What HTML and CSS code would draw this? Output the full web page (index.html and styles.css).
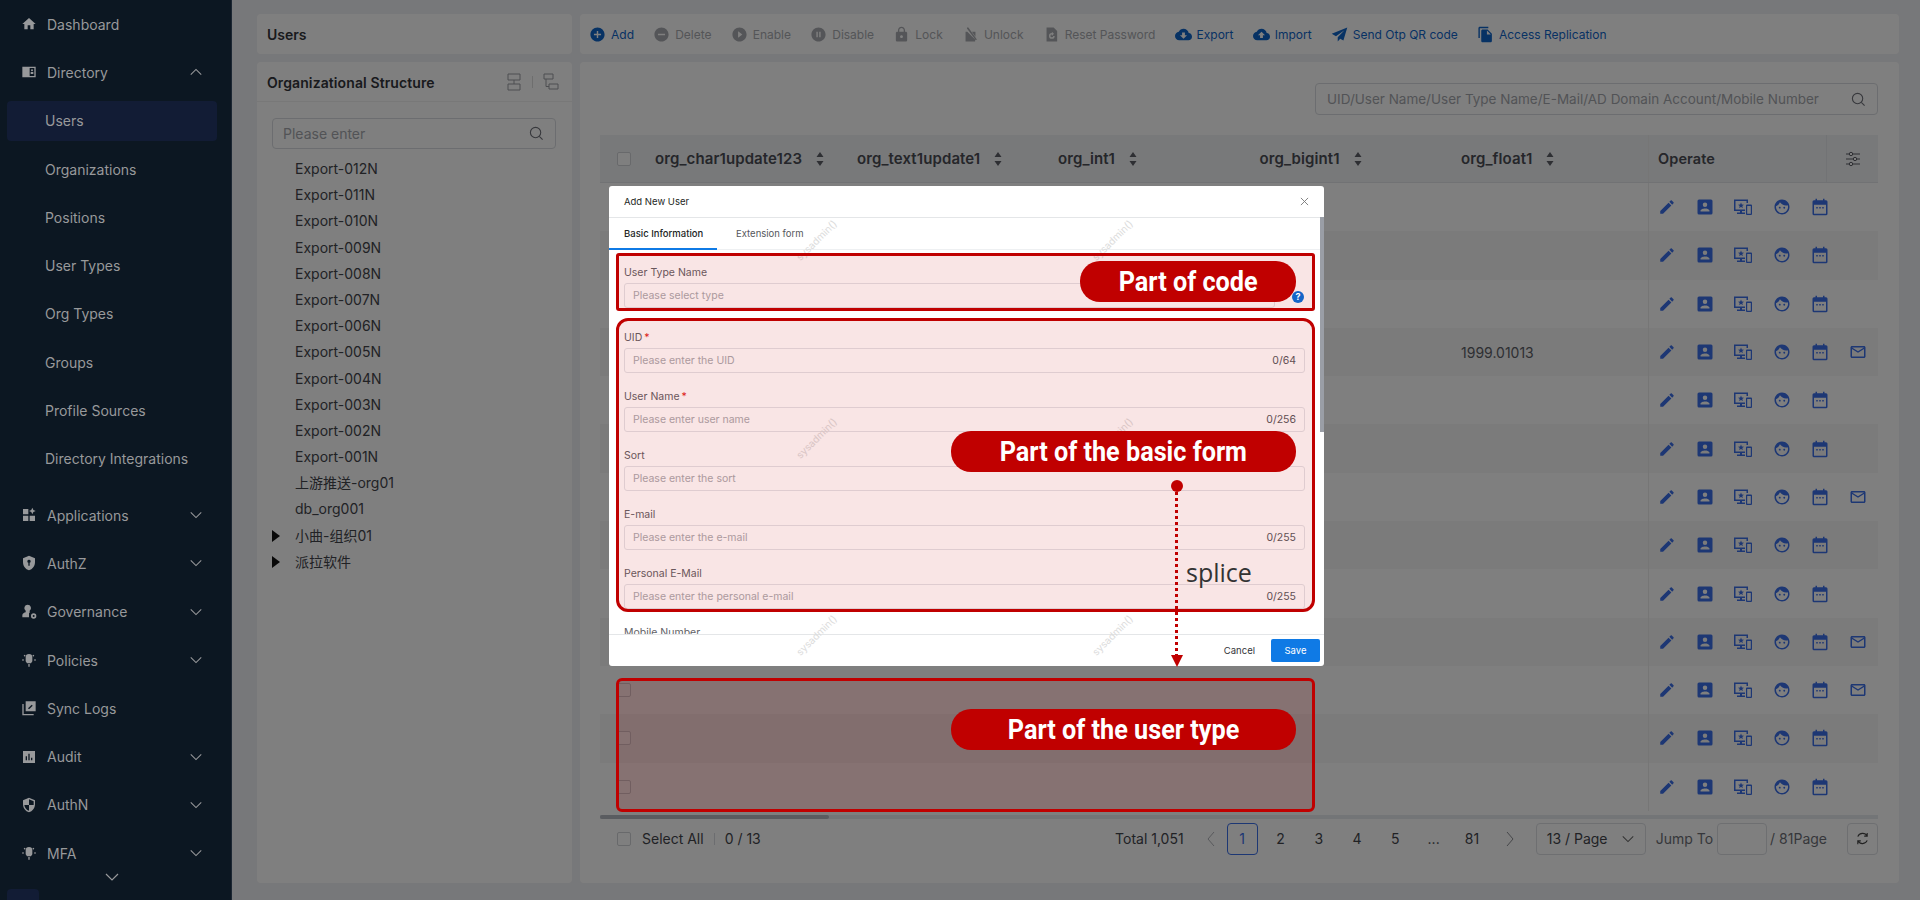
FILE: index.html
```html
<!DOCTYPE html>
<html lang="en">
<head>
    <meta charset="UTF-8">
    <title>Users</title>
    <link rel="stylesheet" href="styles.css">
</head>
<body>
    <svg class="sprites" xmlns="http://www.w3.org/2000/svg">
        <symbol id="i-home" viewBox="0 0 24 24"><path d="M10 20v-6h4v6h5v-8h3L12 3 2 12h3v8z"/></symbol>
        <symbol id="i-dir" viewBox="0 0 24 24"><path fill-rule="evenodd" d="M2 4h20v16H2zM13 6v12h7V6zM16.500 8a1.500 1.500 0 1 1 0 3 1.500 1.500 0 0 1 0-3zM14.500 12h4v3h-4z"/></symbol>
        <symbol id="i-apps" viewBox="0 0 24 24"><path d="M3 3h8v8H3zM3 13h8v8H3zM13 13h8v8h-8zM17 1l1.600 3.400L22 6l-3.400 1.600L17 11l-1.600-3.400L12 6l3.400-1.600z"/></symbol>
        <symbol id="i-shield" viewBox="0 0 24 24"><path fill-rule="evenodd" d="M12 1l9 4v6c0 5.500-3.800 10.700-9 12-5.200-1.300-9-6.500-9-12V5zM12 7a2.500 2.500 0 0 0-1 4.800V16h2v-4.200A2.500 2.500 0 0 0 12 7z"/></symbol>
        <symbol id="i-gov" viewBox="0 0 24 24"><path fill-rule="evenodd" d="M10 1a5 5 0 0 1 3 9v3l-1 1v6H2v-3c0-2.500 3-4 5-4.500V10a5 5 0 0 1 3-9zM19 14a4 4 0 1 1 0 8 4 4 0 0 1 0-8zM19 16.500a1.500 1.500 0 1 0 0 3 1.500 1.500 0 0 0 0-3z"/></symbol>
        <symbol id="i-bulb" viewBox="0 0 24 24"><path d="M12 3a5 5 0 0 1 5 5v6l-2 3H9l-2-3V8a5 5 0 0 1 5-5zM11 18h2v4h-2zM2 11h2v2H2zM20 11h2v2h-2zM4 5l1.500-1L7 5.500 5.500 7zM20 5l-1.500-1L17 5.500 18.500 7z"/></symbol>
        <symbol id="i-logs" viewBox="0 0 24 24"><path d="M7 2h15v15H7zM4 6v15h15v2H2V6z"/><path fill="#0c1722" d="M11 13.500V12l5-5 1.500 1.500-5 5z"/></symbol>
        <symbol id="i-audit" viewBox="0 0 24 24"><path fill-rule="evenodd" d="M3 3h18v18H3zM7 11v6h2v-6zM11 7v10h2V7zM15 13v4h2v-4z"/></symbol>
        <symbol id="i-authn" viewBox="0 0 24 24"><path fill-rule="evenodd" d="M12 1l9 4v6c0 5.500-3.800 10.700-9 12-5.200-1.300-9-6.500-9-12V5zM12 3.200V12H5c.3 3.800 3.200 7.600 7 8.800V12h7V6.300z"/></symbol>
        <symbol id="i-add" viewBox="0 0 24 24"><path d="M12 2C6.480 2 2 6.480 2 12s4.480 10 10 10 10-4.480 10-10S17.520 2 12 2zm5 11h-4v4h-2v-4H7v-2h4V7h2v4h4v2z"/></symbol>
        <symbol id="i-del" viewBox="0 0 24 24"><path d="M12 2C6.480 2 2 6.480 2 12s4.480 10 10 10 10-4.480 10-10S17.520 2 12 2zm5 11H7v-2h10v2z"/></symbol>
        <symbol id="i-play" viewBox="0 0 24 24"><path d="M12 2C6.480 2 2 6.480 2 12s4.480 10 10 10 10-4.480 10-10S17.520 2 12 2zm-2 14.500v-9l6 4.500-6 4.500z"/></symbol>
        <symbol id="i-pause" viewBox="0 0 24 24"><path d="M12 2C6.480 2 2 6.480 2 12s4.480 10 10 10 10-4.480 10-10S17.520 2 12 2zm-1 14H9V8h2v8zm4 0h-2V8h2v8z"/></symbol>
        <symbol id="i-lock" viewBox="0 0 24 24"><path d="M18 8h-1V6c0-2.760-2.240-5-5-5S7 3.240 7 6v2H6c-1.100 0-2 .9-2 2v10c0 1.100.9 2 2 2h12c1.100 0 2-.9 2-2V10c0-1.100-.9-2-2-2zm-6 9c-1.100 0-2-.9-2-2s.9-2 2-2 2 .9 2 2-.9 2-2 2zm3.100-9H8.900V6c0-1.710 1.390-3.100 3.100-3.100 1.710 0 3.100 1.390 3.100 3.100v2z"/></symbol>
        <symbol id="i-unlock" viewBox="0 0 24 24"><path d="M5 8h2.500l11 11V22H5zM7 2h2l12 17-1.500 1L7 3.500zM14 8h5v7z"/></symbol>
        <symbol id="i-reset" viewBox="0 0 24 24"><path fill-rule="evenodd" d="M5 2h10l5 5v15H5zM12.500 10a4 4 0 1 0 4 4h-2a2 2 0 1 1-2-2v2l3-3-3-3z"/></symbol>
        <symbol id="i-down" viewBox="0 0 24 24"><path d="M19.350 10.040C18.670 6.590 15.640 4 12 4 9.110 4 6.600 5.640 5.350 8.040 2.340 8.360 0 10.910 0 14c0 3.310 2.690 6 6 6h13c2.760 0 5-2.240 5-5 0-2.640-2.050-4.780-4.650-4.960zM17 13l-5 5-5-5h3V9h4v4h3z"/></symbol>
        <symbol id="i-up" viewBox="0 0 24 24"><path d="M19.350 10.040C18.670 6.590 15.640 4 12 4 9.110 4 6.600 5.640 5.350 8.040 2.340 8.360 0 10.910 0 14c0 3.310 2.690 6 6 6h13c2.760 0 5-2.240 5-5 0-2.640-2.050-4.780-4.650-4.960zM14 13v4h-4v-4H7l5-5 5 5h-3z"/></symbol>
        <symbol id="i-send" viewBox="0 0 24 24"><path d="M23 2L1 11l6 3.500L19 6 9.500 16v6l3.500-4 4.500 2.500z"/></symbol>
        <symbol id="i-copy" viewBox="0 0 24 24"><path d="M16 1H4c-1.100 0-2 .9-2 2v14h2V3h12V1zm-1 4l6 6v10c0 1.100-.9 2-2 2H7.990C6.890 23 6 22.100 6 21l.01-14c0-1.100.89-2 1.990-2h7zm-1 7h5.500L14 6.500V12z"/></symbol>
        <symbol id="i-edit" viewBox="0 0 24 24"><path d="M3 17.250V21h3.750L17.810 9.940l-3.750-3.750L3 17.250zM20.710 7.040c.39-.39.39-1.020 0-1.410l-2.340-2.340c-.39-.39-1.020-.39-1.410 0l-1.830 1.830 3.750 3.750 1.830-1.830z"/></symbol>
        <symbol id="i-contact" viewBox="0 0 24 24"><path fill-rule="evenodd" d="M4 2h16a2 2 0 0 1 2 2v16a2 2 0 0 1-2 2H4a2 2 0 0 1-2-2V4a2 2 0 0 1 2-2zM12 6a3 3 0 1 0 0 6 3 3 0 0 0 0-6zM6 18h12v-1c0-2-4-3-6-3s-6 1-6 3z"/></symbol>
        <symbol id="i-device" viewBox="0 0 18 18"><path fill-rule="evenodd" d="M0 1.500h14V5h-1.500V3H1.500v8.500H11V13H8v1.500h3V16H3v-1.500h3V13H0zM7 4.500l.8 2 2.200.2-1.700 1.300.6 2.100L7 9l-1.900 1.100.6-2.100L4 6.700l2.200-.2zM13 6.500h4a1 1 0 0 1 1 1V16a1 1 0 0 1-1 1h-4a1 1 0 0 1-1-1V7.500a1 1 0 0 1 1-1zM13.200 8v7.800h3.600V8z"/></symbol>
        <symbol id="i-face" viewBox="0 0 24 24"><path d="M9 11.750c-.69 0-1.250.56-1.250 1.250s.56 1.250 1.250 1.250 1.250-.56 1.250-1.250-.56-1.250-1.250-1.250zm6 0c-.69 0-1.250.56-1.250 1.250s.56 1.250 1.250 1.250 1.250-.56 1.250-1.250-.56-1.250-1.250-1.250zM12 2C6.480 2 2 6.480 2 12s4.480 10 10 10 10-4.480 10-10S17.520 2 12 2zm0 18c-4.410 0-8-3.590-8-8 0-.29.02-.58.05-.86 2.360-1.050 4.230-2.980 5.210-5.370C11.070 8.330 14.050 10 17.420 10c.78 0 1.530-.09 2.250-.26.21.71.33 1.470.33 2.260 0 4.410-3.590 8-8 8z"/></symbol>
        <symbol id="i-cal" viewBox="0 0 24 24"><path fill-rule="evenodd" d="M6 1h2v2h8V1h2v2h2a2 2 0 0 1 2 2v16a2 2 0 0 1-2 2H4a2 2 0 0 1-2-2V5a2 2 0 0 1 2-2h2zM4 9v12h16V9zM7 12h2v2H7zM11 12h2v2h-2zM15 12h2v2h-2z"/></symbol>
        <symbol id="i-mail" viewBox="0 0 24 24"><path d="M20 4H4c-1.100 0-2 .9-2 2v12c0 1.100.9 2 2 2h16c1.100 0 2-.9 2-2V6c0-1.100-.9-2-2-2zm0 14H4V8l8 5 8-5v10zm-8-7L4 6h16l-8 5z"/></symbol>
        <symbol id="i-sort" viewBox="0 0 8 14"><path d="M4 0l3.500 5h-7zM4 14L.5 9h7z"/></symbol>
        <symbol id="i-search" viewBox="0 0 16 16"><circle cx="7" cy="7" r="5.500" fill="none" stroke="currentColor" stroke-width="1.200"/><path d="M11 11l3.500 3.500" fill="none" stroke="currentColor" stroke-width="1.200"/></symbol>
        <symbol id="i-chev" viewBox="0 0 16 16"><path d="M2 5l6 6 6-6" fill="none" stroke="currentColor" stroke-width="1.200"/></symbol>
    </svg>

    <div class="sidebar">
        <div class="nav-top"><svg class="nav-icon"><use href="#i-home"/></svg>Dashboard</div>
        <div class="nav-top"><svg class="nav-icon"><use href="#i-dir"/></svg>Directory<svg class="nav-arrow flip"><use href="#i-chev"/></svg></div>
        <div class="nav-sub active">Users</div>
        <div class="nav-sub">Organizations</div>
        <div class="nav-sub">Positions</div>
        <div class="nav-sub">User Types</div>
        <div class="nav-sub">Org Types</div>
        <div class="nav-sub">Groups</div>
        <div class="nav-sub">Profile Sources</div>
        <div class="nav-sub">Directory Integrations</div>
        <div class="nav-top spaced"><svg class="nav-icon"><use href="#i-apps"/></svg>Applications<svg class="nav-arrow"><use href="#i-chev"/></svg></div>
        <div class="nav-top"><svg class="nav-icon"><use href="#i-shield"/></svg>AuthZ<svg class="nav-arrow"><use href="#i-chev"/></svg></div>
        <div class="nav-top"><svg class="nav-icon"><use href="#i-gov"/></svg>Governance<svg class="nav-arrow"><use href="#i-chev"/></svg></div>
        <div class="nav-top"><svg class="nav-icon"><use href="#i-bulb"/></svg>Policies<svg class="nav-arrow"><use href="#i-chev"/></svg></div>
        <div class="nav-top"><svg class="nav-icon"><use href="#i-logs"/></svg>Sync Logs</div>
        <div class="nav-top"><svg class="nav-icon"><use href="#i-audit"/></svg>Audit<svg class="nav-arrow"><use href="#i-chev"/></svg></div>
        <div class="nav-top"><svg class="nav-icon"><use href="#i-authn"/></svg>AuthN<svg class="nav-arrow"><use href="#i-chev"/></svg></div>
        <div class="nav-top"><svg class="nav-icon"><use href="#i-bulb"/></svg>MFA<svg class="nav-arrow"><use href="#i-chev"/></svg></div>
        <svg class="nav-more"><use href="#i-chev"/></svg>
        <div class="nav-collapse"></div>
    </div>

    <div class="main">
        <div class="left-col">
            <div class="panel page-title">Users</div>
            <div class="panel tree-panel">
                <div class="tree-head">
                    <span>Organizational Structure</span>
                    <span class="tree-tools">
                        <svg viewBox="0 0 16 18"><path d="M2 1h12v6H2zM2 11h12v6H2zM8 7v4" fill="none" stroke="currentColor"/></svg>
                        <i class="tool-sep"></i>
                        <svg viewBox="0 0 16 18"><path d="M1 1h9v5H1zM6 11h9v5H6zM3 6v7.500h3" fill="none" stroke="currentColor"/></svg>
                    </span>
                </div>
                <div class="tree-body">
                    <div class="input tree-search"><span class="placeholder">Please enter</span><svg class="search-icon"><use href="#i-search"/></svg></div>
                    <div class="tree-item">Export-012N</div>
                    <div class="tree-item">Export-011N</div>
                    <div class="tree-item">Export-010N</div>
                    <div class="tree-item">Export-009N</div>
                    <div class="tree-item">Export-008N</div>
                    <div class="tree-item">Export-007N</div>
                    <div class="tree-item">Export-006N</div>
                    <div class="tree-item">Export-005N</div>
                    <div class="tree-item">Export-004N</div>
                    <div class="tree-item">Export-003N</div>
                    <div class="tree-item">Export-002N</div>
                    <div class="tree-item">Export-001N</div>
                    <div class="tree-item">上游推送-org01</div>
                    <div class="tree-item">db_org001</div>
                    <div class="tree-item has-kids">小曲-组织01</div>
                    <div class="tree-item has-kids">派拉软件</div>
                </div>
            </div>
        </div>

        <div class="right-col">
            <div class="panel toolbar">
                <span class="tool"><svg><use href="#i-add"/></svg>Add</span>
                <span class="tool off"><svg><use href="#i-del"/></svg>Delete</span>
                <span class="tool off"><svg><use href="#i-play"/></svg>Enable</span>
                <span class="tool off"><svg><use href="#i-pause"/></svg>Disable</span>
                <span class="tool off"><svg><use href="#i-lock"/></svg>Lock</span>
                <span class="tool off"><svg><use href="#i-unlock"/></svg>Unlock</span>
                <span class="tool off"><svg><use href="#i-reset"/></svg>Reset Password</span>
                <span class="tool"><svg><use href="#i-down"/></svg>Export</span>
                <span class="tool"><svg><use href="#i-up"/></svg>Import</span>
                <span class="tool"><svg><use href="#i-send"/></svg>Send Otp QR code</span>
                <span class="tool"><svg><use href="#i-copy"/></svg>Access Replication</span>
            </div>
            <div class="panel table-panel">
                <div class="table-search">
                    <div class="input big-search"><span class="placeholder">UID/User Name/User Type Name/E-Mail/AD Domain Account/Mobile Number</span><svg class="search-icon"><use href="#i-search"/></svg></div>
                </div>
                <div class="table">
                    <div class="row head">
                        <span><i class="check"></i></span>
                        <span>org_char1update123<svg class="sort"><use href="#i-sort"/></svg></span>
                        <span>org_text1update1<svg class="sort"><use href="#i-sort"/></svg></span>
                        <span>org_int1<svg class="sort"><use href="#i-sort"/></svg></span>
                        <span>org_bigint1<svg class="sort"><use href="#i-sort"/></svg></span>
                        <span>org_float1<svg class="sort"><use href="#i-sort"/></svg></span>
                        <span class="ops ops-head">Operate<b class="col-set"><svg viewBox="0 0 16 16"><path d="M1 3h14M1 8h14M1 13h14" stroke="currentColor" fill="none"/><circle cx="6" cy="3" r="1.700" fill="#fff" stroke="currentColor"/><circle cx="10" cy="8" r="1.700" fill="#fff" stroke="currentColor"/><circle cx="6" cy="13" r="1.700" fill="#fff" stroke="currentColor"/></svg></b></span>
                    </div>
                    <div class="row"><span><i class="check"></i></span><span></span><span></span><span></span><span></span><span></span><span class="ops"><svg><use href="#i-edit"/></svg><svg><use href="#i-contact"/></svg><svg><use href="#i-device"/></svg><svg><use href="#i-face"/></svg><svg><use href="#i-cal"/></svg></span></div>
                    <div class="row"><span><i class="check"></i></span><span></span><span></span><span></span><span></span><span></span><span class="ops"><svg><use href="#i-edit"/></svg><svg><use href="#i-contact"/></svg><svg><use href="#i-device"/></svg><svg><use href="#i-face"/></svg><svg><use href="#i-cal"/></svg></span></div>
                    <div class="row"><span><i class="check"></i></span><span></span><span></span><span></span><span></span><span></span><span class="ops"><svg><use href="#i-edit"/></svg><svg><use href="#i-contact"/></svg><svg><use href="#i-device"/></svg><svg><use href="#i-face"/></svg><svg><use href="#i-cal"/></svg></span></div>
                    <div class="row"><span><i class="check"></i></span><span></span><span></span><span></span><span></span><span>1999.01013</span><span class="ops"><svg><use href="#i-edit"/></svg><svg><use href="#i-contact"/></svg><svg><use href="#i-device"/></svg><svg><use href="#i-face"/></svg><svg><use href="#i-cal"/></svg><svg><use href="#i-mail"/></svg></span></div>
                    <div class="row"><span><i class="check"></i></span><span></span><span></span><span></span><span></span><span></span><span class="ops"><svg><use href="#i-edit"/></svg><svg><use href="#i-contact"/></svg><svg><use href="#i-device"/></svg><svg><use href="#i-face"/></svg><svg><use href="#i-cal"/></svg></span></div>
                    <div class="row"><span><i class="check"></i></span><span></span><span></span><span></span><span></span><span></span><span class="ops"><svg><use href="#i-edit"/></svg><svg><use href="#i-contact"/></svg><svg><use href="#i-device"/></svg><svg><use href="#i-face"/></svg><svg><use href="#i-cal"/></svg></span></div>
                    <div class="row"><span><i class="check"></i></span><span></span><span></span><span></span><span></span><span></span><span class="ops"><svg><use href="#i-edit"/></svg><svg><use href="#i-contact"/></svg><svg><use href="#i-device"/></svg><svg><use href="#i-face"/></svg><svg><use href="#i-cal"/></svg><svg><use href="#i-mail"/></svg></span></div>
                    <div class="row"><span><i class="check"></i></span><span></span><span></span><span></span><span></span><span></span><span class="ops"><svg><use href="#i-edit"/></svg><svg><use href="#i-contact"/></svg><svg><use href="#i-device"/></svg><svg><use href="#i-face"/></svg><svg><use href="#i-cal"/></svg></span></div>
                    <div class="row"><span><i class="check"></i></span><span></span><span></span><span></span><span></span><span></span><span class="ops"><svg><use href="#i-edit"/></svg><svg><use href="#i-contact"/></svg><svg><use href="#i-device"/></svg><svg><use href="#i-face"/></svg><svg><use href="#i-cal"/></svg></span></div>
                    <div class="row"><span><i class="check"></i></span><span></span><span></span><span></span><span></span><span></span><span class="ops"><svg><use href="#i-edit"/></svg><svg><use href="#i-contact"/></svg><svg><use href="#i-device"/></svg><svg><use href="#i-face"/></svg><svg><use href="#i-cal"/></svg><svg><use href="#i-mail"/></svg></span></div>
                    <div class="row"><span><i class="check"></i></span><span></span><span></span><span></span><span></span><span></span><span class="ops"><svg><use href="#i-edit"/></svg><svg><use href="#i-contact"/></svg><svg><use href="#i-device"/></svg><svg><use href="#i-face"/></svg><svg><use href="#i-cal"/></svg><svg><use href="#i-mail"/></svg></span></div>
                    <div class="row"><span><i class="check"></i></span><span></span><span></span><span></span><span></span><span></span><span class="ops"><svg><use href="#i-edit"/></svg><svg><use href="#i-contact"/></svg><svg><use href="#i-device"/></svg><svg><use href="#i-face"/></svg><svg><use href="#i-cal"/></svg></span></div>
                    <div class="row"><span><i class="check"></i></span><span></span><span></span><span></span><span></span><span></span><span class="ops"><svg><use href="#i-edit"/></svg><svg><use href="#i-contact"/></svg><svg><use href="#i-device"/></svg><svg><use href="#i-face"/></svg><svg><use href="#i-cal"/></svg></span></div>
                </div>
                <div class="hscroll"><div class="hscroll-thumb"></div></div>
                <div class="pager">
                    <i class="check"></i>
                    <span class="select-all">Select All</span>
                    <span class="select-count">0 / 13</span>
                    <span class="total">Total 1,051</span>
                    <svg class="pg-arrow prev" viewBox="0 0 10 16"><path d="M8 1L2 8l6 7" fill="none" stroke="currentColor"/></svg>
                    <span class="pg current">1</span>
                    <span class="pg">2</span>
                    <span class="pg">3</span>
                    <span class="pg">4</span>
                    <span class="pg">5</span>
                    <span class="pg">...</span>
                    <span class="pg">81</span>
                    <svg class="pg-arrow next" viewBox="0 0 10 16"><path d="M2 1l6 7-6 7" fill="none" stroke="currentColor"/></svg>
                    <span class="pg-size">13 / Page<svg><use href="#i-chev"/></svg></span>
                    <span class="jump">Jump To</span>
                    <span class="jump-box"></span>
                    <span class="jump jump-end">/ 81Page</span>
                    <span class="refresh"><svg viewBox="0 0 16 16"><path d="M13 5.500A5.500 5.500 0 0 0 3 6M3 10.500A5.500 5.500 0 0 0 13 10M13 2v3.500H9.800M3 14v-3.500h3.200" fill="none" stroke="currentColor" stroke-width="1.200"/></svg></span>
                </div>
            </div>
        </div>
        <div class="mask"></div>
    </div>

    <div class="modal">
        <div class="modal-head">Add New User<svg viewBox="0 0 10 10"><path d="M1 1l8 8M9 1l-8 8" stroke="currentColor" fill="none"/></svg></div>
        <div class="tabs">
            <span class="tab active">Basic Information</span>
            <span class="tab">Extension form</span>
        </div>
        <div class="modal-body">
            <div class="field type-field">
                <label>User Type Name</label>
                <div class="type-line"><div class="f-input"><span>Please select type</span></div></div>
            </div>
            <div class="field"><label>UID<em>*</em></label><div class="f-input"><span>Please enter the UID</span><b>0/64</b></div></div>
            <div class="field"><label>User Name<em>*</em></label><div class="f-input"><span>Please enter user name</span><b>0/256</b></div></div>
            <div class="field"><label>Sort</label><div class="f-input"><span>Please enter the sort</span></div></div>
            <div class="field"><label>E-mail</label><div class="f-input"><span>Please enter the e-mail</span><b>0/255</b></div></div>
            <div class="field"><label>Personal E-Mail</label><div class="f-input"><span>Please enter the personal e-mail</span><b>0/255</b></div></div>
            <div class="field"><label>Mobile Number</label></div>
        </div>
        <div class="modal-foot">
            <span class="btn-cancel">Cancel</span>
            <span class="btn-save">Save</span>
        </div>
        <div class="modal-scroll"></div>
    </div>

    <!-- watermark and annotations drawn on top of the screenshot -->
    <span class="mark m1">sysadmin()</span>
    <span class="mark m2">sysadmin()</span>
    <span class="mark m3">sysadmin()</span>
    <span class="mark m4">sysadmin()</span>
    <span class="mark m5">sysadmin()</span>
    <span class="mark m6">sysadmin()</span>

    <div class="zone zone-code"></div>
    <div class="zone zone-form"></div>
    <div class="zone zone-type"></div>
    <span class="help">?</span>
    <div class="pill pill-code"><span>Part of code</span></div>
    <div class="pill pill-form"><span>Part of the basic form</span></div>
    <div class="pill pill-type"><span>Part of the user type</span></div>
    <div class="splice-line"></div>
    <span class="splice-text">splice</span>
</body>
</html>
```

FILE: styles.css
```css
* {
    box-sizing: border-box;
}
html, body {
    height: 100%;
}
body {
    margin: 0;
    display: flex;
    height: 900px;
    overflow: hidden;
    position: relative;
    font-family: Inter, "Noto Sans CJK SC", sans-serif;
    font-size: 14px;
    color: #5c5e66;
    background-color: #eff1f4;
}
.sprites {
    display: none;
}

/* sidebar */
.sidebar {
    width: 232px;
    flex-shrink: 0;
    height: 900px;
    padding: 0 14px 0 0;
    background-color: #0c1722;
    color: #98999b;
    border-right: 1px solid #1c2733;
    position: relative;
}
.nav-top {
    height: 48.300px;
    display: flex;
    align-items: center;
    padding-left: 21px;
    fill: #98999b;
}
.nav-top.spaced {
    margin-top: 8px;
}
.nav-icon {
    width: 16px;
    height: 16px;
    margin-right: 10px;
    flex-shrink: 0;
}
.nav-arrow {
    position: absolute;
    left: 189px;
    width: 14px;
    height: 14px;
    color: #98999b;
}
.nav-arrow.flip {
    transform: rotate(180deg);
}
.nav-sub {
    height: 48.300px;
    display: flex;
    align-items: center;
    margin-left: 7px;
    padding-left: 38px;
}
.nav-sub.active {
    height: 40px;
    margin: 4px 0 4.300px 7px;
    background-color: #121c35;
    border-radius: 4px;
}
.nav-more {
    position: absolute;
    left: 104px;
    top: 869px;
    width: 16px;
    height: 16px;
    color: #98999b;
}
.nav-collapse {
    position: absolute;
    left: 7px;
    top: 889px;
    width: 32px;
    height: 20px;
    border-radius: 4px;
    background-color: #121c35;
}

/* main area */
.main {
    flex: 1;
    display: flex;
    gap: 8px;
    padding: 14px 21px 17px 25px;
    position: relative;
}
.mask {
    position: absolute;
    left: 0;
    top: 0;
    right: 0;
    bottom: 0;
    background-color: rgba(0, 0, 0, 0.5);
}
.panel {
    background-color: #fff;
    border-radius: 4px;
}
.left-col {
    width: 315px;
    display: flex;
    flex-direction: column;
    gap: 8px;
}
.right-col {
    flex: 1;
    display: flex;
    flex-direction: column;
    gap: 8px;
}
.page-title {
    height: 40px;
    padding: 0 10px;
    display: flex;
    align-items: center;
    font-weight: 600;
    color: #33353b;
}
.tree-panel {
    flex: 1;
}
.tree-head {
    height: 40px;
    padding: 1px 13px 0 10px;
    display: flex;
    align-items: center;
    justify-content: space-between;
    font-weight: 600;
    letter-spacing: 0.1px;
    color: #33353b;
    border-bottom: 1px solid #f0f0f0;
}
.tree-tools {
    display: flex;
    align-items: center;
    gap: 10px;
    color: #9a9ca2;
}
.tree-tools svg {
    width: 16px;
    height: 18px;
}
.tool-sep {
    width: 1px;
    height: 12px;
    background-color: #ddd;
}
.tree-body {
    padding: 16px 16px 0 15px;
}
.input {
    display: flex;
    align-items: center;
    justify-content: space-between;
    border: 1px solid #d8dbe0;
    border-radius: 4px;
}
.placeholder {
    color: #a5a7ad;
}
.search-icon {
    width: 15px;
    height: 15px;
    color: #70727a;
    flex-shrink: 0;
}
.tree-search {
    height: 31px;
    padding: 0 11px 0 10px;
    margin-bottom: 7px;
}
.tree-item {
    height: 26.200px;
    line-height: 26.200px;
    padding-left: 23px;
    position: relative;
    color: #43454b;
}
.tree-item.has-kids::before {
    content: "";
    position: absolute;
    left: 0;
    top: 7px;
    border-left: 8px solid #111;
    border-top: 6px solid transparent;
    border-bottom: 6px solid transparent;
}

/* toolbar */
.toolbar {
    height: 40px;
    padding: 0 9px;
    display: flex;
    align-items: center;
    gap: 19.200px;
    font-size: 12px;
}
.tool {
    display: flex;
    align-items: center;
    gap: 5px;
    color: #0f64c8;
    fill: #0f64c8;
}
.tool svg {
    width: 17px;
    height: 17px;
}
.tool.off {
    color: #a9abb0;
    fill: #a9abb0;
}

/* table */
.table-panel {
    flex: 1;
    padding: 21px 21px 0 20px;
}
.table-search {
    display: flex;
    justify-content: flex-end;
    margin-bottom: 20px;
}
.big-search {
    width: 563px;
    height: 32px;
    padding: 0 11px;
    font-size: 13.500px;
}
.row {
    display: grid;
    grid-template-columns: 55px 202px 201px 201.500px 201.500px 187px 230px;
    height: 48.300px;
    align-items: center;
}
.row:nth-child(odd) {
    background-color: #f6f6f6;
}
.row > span {
    display: flex;
    align-items: center;
    height: 100%;
}
.row > span:first-child {
    padding-left: 17px;
}
.row.head {
    height: 48px;
    background-color: #f0f2f5;
    border-bottom: 1px solid #e2e4e8;
    font-weight: 600;
    font-size: 15px;
    letter-spacing: 0.1px;
    color: #4b4d54;
}
.check {
    display: block;
    width: 14px;
    height: 14px;
    border: 1px solid #d0d2d6;
    border-radius: 2px;
    background-color: #fff;
    flex-shrink: 0;
}
.sort {
    width: 8px;
    height: 14px;
    margin-left: 14px;
    fill: #5c5e66;
}
.ops {
    border-left: 1px solid #ededed;
    padding-left: 9px;
    gap: 20.200px;
    fill: #3a6ee8;
}
.ops svg {
    width: 18px;
    height: 18px;
    flex-shrink: 0;
}
.row.head .ops-head {
    position: relative;
    font-size: 14.500px;
}
.col-set {
    position: absolute;
    right: 0;
    top: 0;
    bottom: 0;
    width: 52px;
    border-left: 1px solid #e4e6ea;
    display: flex;
    align-items: center;
    justify-content: center;
}
.ops-head .col-set svg {
    width: 16px;
    height: 16px;
    color: #5c5e66;
}
.hscroll {
    height: 4px;
    margin-top: 4px;
    background-color: #e6ebee;
}
.hscroll-thumb {
    width: 229px;
    height: 4px;
    border-radius: 2px;
    background-color: #b4b8c0;
}

/* pager */
.pager {
    display: flex;
    align-items: center;
    height: 32px;
    margin-top: 4px;
    padding-left: 17px;
    color: #43454b;
}
.select-all {
    margin-left: 11px;
    padding-right: 10px;
    border-right: 1px solid #d8dbe0;
    line-height: 12px;
}
.select-count {
    margin-left: 10px;
}
.total {
    margin-left: auto;
    margin-right: 22px;
}
.pg-arrow {
    width: 10px;
    height: 16px;
    color: #8b8d93;
}
.pg-arrow.prev {
    margin-right: 11px;
    color: #b0b2b8;
}
.pg-arrow.next {
    margin-left: 10px;
    margin-right: 21px;
}
.pg {
    width: 31px;
    height: 32px;
    margin-right: 7.300px;
    display: flex;
    align-items: center;
    justify-content: center;
}
.pg.current {
    border: 1px solid #3a6ee8;
    border-radius: 4px;
    color: #3a6ee8;
}
.pg-size {
    width: 110px;
    height: 32px;
    padding: 0 10px;
    display: flex;
    align-items: center;
    justify-content: space-between;
    border: 1px solid #dcdee2;
    border-radius: 4px;
}
.pg-size svg {
    width: 14px;
    height: 14px;
    color: #666;
}
.jump {
    margin: 0 4px 0 10px;
    color: #6d6f76;
}
.jump.jump-end {
    margin: 0 0 0 3px;
}
.jump-box {
    width: 50px;
    height: 32px;
    border: 1px solid #dcdee2;
    border-radius: 4px;
}
.refresh {
    width: 31px;
    height: 32px;
    margin-left: 20px;
    display: flex;
    align-items: center;
    justify-content: center;
    border: 1px solid #dcdee2;
    border-radius: 4px;
    color: #444;
}
.refresh svg {
    width: 15px;
    height: 15px;
}

/* modal */
.modal {
    position: absolute;
    left: 609px;
    top: 186px;
    width: 715px;
    height: 480px;
    background-color: #fff;
    border-radius: 3px;
    display: flex;
    flex-direction: column;
    font-size: 10.500px;
    color: #55575c;
}
.modal-head {
    height: 32px;
    padding: 0 15px;
    display: flex;
    align-items: center;
    justify-content: space-between;
    font-size: 9.500px;
    color: #1d1f24;
    border-bottom: 1px solid #e4e6e8;
}
.modal-head svg {
    width: 9px;
    height: 9px;
    color: #777;
}
.tabs {
    height: 32px;
    display: flex;
    font-size: 9.500px;
    border-bottom: 1px solid #eef0f2;
}
.tab {
    padding: 0 15px;
    display: flex;
    align-items: center;
    margin-right: 4px;
    border-bottom: 2px solid transparent;
    height: 32px;
    white-space: nowrap;
}
.tab.active {
    width: 108px;
    color: #1d1f24;
    font-weight: 500;
    border-bottom-color: #0f7ae5;
}
.modal-body {
    flex: 1;
    overflow: hidden;
    padding: 16px 19px 0 15px;
}
.modal-scroll {
    position: absolute;
    right: 0;
    top: 31px;
    width: 4px;
    height: 215px;
    background-color: #9a9ea6;
}
.field {
    height: 59px;
}
.field label {
    display: block;
    height: 17px;
    line-height: 14px;
    color: #5f6166;
}
.field em {
    color: #e02020;
    font-style: normal;
    margin-left: 2px;
}
.field.type-field {
    height: 65px;
}
.type-line {
    padding-right: 30px;
}
.f-input {
    height: 25px;
    padding: 0 8px;
    display: flex;
    align-items: center;
    justify-content: space-between;
    border: 1px solid #e3e4e8;
    border-radius: 3px;
    color: #a9abb0;
}
.f-input b {
    font-weight: 400;
    color: #55575c;
}
.modal-foot {
    height: 32px;
    padding: 0 4px 0 0;
    display: flex;
    align-items: center;
    justify-content: flex-end;
    gap: 16px;
    font-size: 9.500px;
    border-top: 1px solid #e4e6e8;
    color: #33353a;
}
.btn-save {
    width: 49px;
    height: 23px;
    display: flex;
    align-items: center;
    justify-content: center;
    background-color: #0f7ae5;
    border-radius: 2px;
    color: #fff;
}

/* watermark */
.mark {
    position: absolute;
    font-size: 10px;
    color: #dcdcdc;
    transform: rotate(-45deg);
    white-space: nowrap;
}
.m1 { left: 790px; top: 234px; }
.m2 { left: 1086px; top: 234px; }
.m3 { left: 790px; top: 432px; }
.m4 { left: 1086px; top: 432px; }
.m5 { left: 790px; top: 629px; }
.m6 { left: 1086px; top: 629px; }

/* annotations */
.zone {
    position: absolute;
    left: 616px;
    width: 699px;
    border: 3px solid #c00000;
    background-color: rgba(200, 0, 0, 0.1);
}
.zone-code {
    top: 253px;
    height: 58px;
    border-radius: 3px;
}
.zone-form {
    top: 318px;
    height: 294px;
    border-radius: 12px;
}
.zone-type {
    top: 678px;
    height: 134px;
    border-radius: 6px;
}
.help {
    position: absolute;
    left: 1292px;
    top: 291px;
    width: 12px;
    height: 12px;
    border-radius: 50%;
    background-color: #1565c8;
    color: #fff;
    font-size: 9px;
    font-weight: 700;
    line-height: 12px;
    text-align: center;
}
.pill {
    position: absolute;
    left: 951px;
    width: 345px;
    height: 41px;
    border-radius: 20px;
    background-color: #c00000;
    color: #fff;
    font-family: Roboto, sans-serif;
    font-weight: 700;
    font-size: 28px;
    line-height: 41px;
    text-align: center;
    white-space: nowrap;
}
.pill span {
    display: inline-block;
    transform: scaleX(0.9);
}
.pill-code {
    left: 1080px;
    width: 216px;
    top: 261px;
}
.pill-form {
    top: 431px;
}
.pill-type {
    top: 709px;
}
.splice-line {
    position: absolute;
    left: 1175px;
    top: 486px;
    height: 171px;
    border-left: 3px dotted #c00000;
}
.splice-line::before {
    content: "";
    position: absolute;
    left: -7.500px;
    top: -6px;
    width: 12px;
    height: 12px;
    border-radius: 50%;
    background-color: #c00000;
}
.splice-line::after {
    content: "";
    position: absolute;
    left: -7.500px;
    bottom: -10px;
    border-top: 12px solid #c00000;
    border-left: 6px solid transparent;
    border-right: 6px solid transparent;
}
.splice-text {
    position: absolute;
    left: 1186px;
    top: 552px;
    font-family: "Open Sans", sans-serif;
    font-size: 25px;
    line-height: 40px;
    color: #333;
}
```
